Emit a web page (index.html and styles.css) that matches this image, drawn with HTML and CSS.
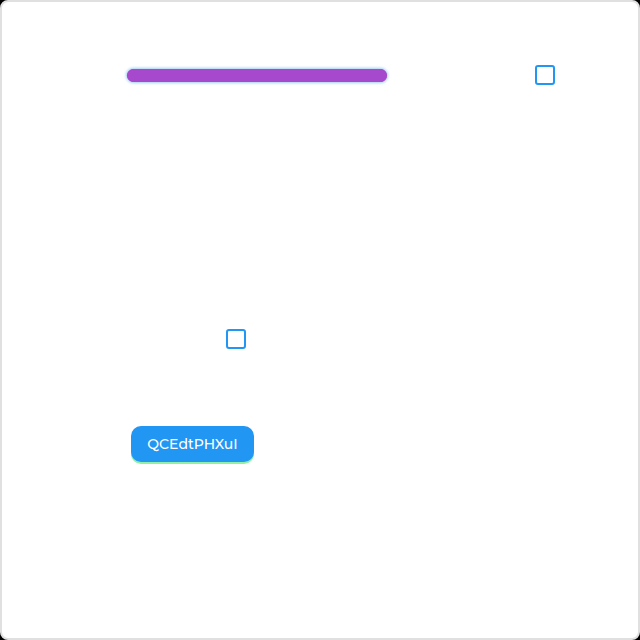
FILE: index.html
```html
<!DOCTYPE html>
<html lang="en">
<head>
<meta charset="utf-8">
<meta name="viewport" content="width=device-width, initial-scale=1">
<title>Panel</title>
<link rel="stylesheet" href="styles.css">
</head>
<body>
<main class="panel">
  <div class="row row-top">
    <progress class="bar" value="100" max="100" aria-label="Progress"></progress>
    <input class="check check-top" type="checkbox" aria-label="First option">
  </div>
  <div class="row row-middle">
    <input class="check check-middle" type="checkbox" aria-label="Second option">
  </div>
  <div class="row row-bottom">
    <button class="action" type="button">QCEdtPHXuI</button>
  </div>
</main>
</body>
</html>
```
FILE: styles.css
```css
* {
  box-sizing: border-box;
}

body {
  margin: 0;
  background: #000;
  font-family: Montserrat, Inter, sans-serif;
}

.panel {
  min-height: 100vh;
  padding-top: 63px;
  background: #fff;
  border: 2px solid #e0e0e0;
  border-radius: 8px;
}

.row {
  display: grid;
  align-items: center;
}

.row-top {
  grid-template-columns: 125fr 260fr 148fr 103fr;
}

.row-middle {
  grid-template-columns: 224fr 412fr;
  margin-top: 244px;
}

.row-bottom {
  grid-template-columns: 129fr 507fr;
  margin-top: 77px;
}

.bar {
  grid-column: 2;
  appearance: none;
  width: 100%;
  height: 13px;
  border: 0;
  border-radius: 7px;
  background: #a649cc;
  box-shadow: 0 0 3px 1px #9fcdf2;
}

.bar::-webkit-progress-bar {
  background: transparent;
}

.bar::-webkit-progress-value {
  border-radius: 7px;
  background: #a649cc;
}

.check {
  appearance: none;
  width: 20px;
  height: 20px;
  margin: 0;
  border: 2px solid #2196f3;
  border-radius: 3px;
  background: #fff;
}

.check:checked {
  background: #2196f3;
}

.check-top {
  grid-column: 4;
}

.check-middle {
  grid-column: 2;
}

.action {
  grid-column: 2;
  justify-self: start;
  min-width: 123px;
  height: 36px;
  padding: 0 16px;
  border: 0;
  border-radius: 10px;
  background: #2196f3;
  box-shadow: 0 2px 0 #90f0a8;
  color: #fff;
  font-family: inherit;
  font-size: 14px;
  font-weight: 500;
  line-height: 16px;
}
```
